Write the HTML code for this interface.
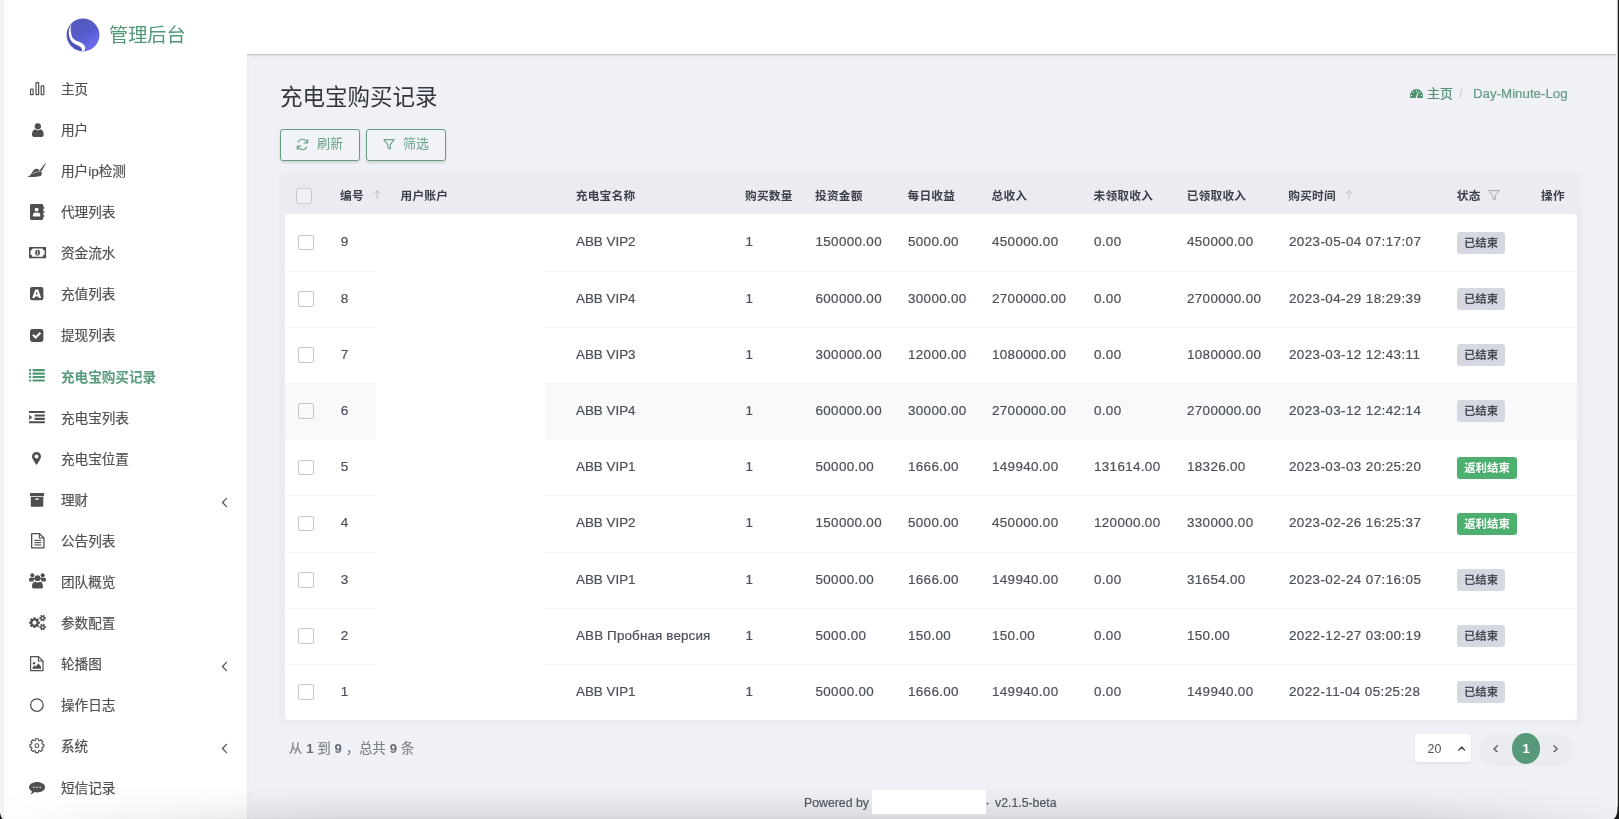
<!DOCTYPE html>
<html lang="zh-CN">
<head>
<meta charset="utf-8">
<title>充电宝购买记录</title>
<style>
*{box-sizing:border-box;margin:0;padding:0}
html,body{width:1619px;height:819px;overflow:hidden}
body{position:relative;background:#eff1f6;font-family:"Liberation Sans","Noto Sans CJK SC",sans-serif;color:#414750;font-size:14px}
.abs{position:absolute}
#topbar{position:absolute;left:0;top:0;width:1619px;height:54px;background:#fff}
#topline{position:absolute;left:247px;top:53px;width:1372px;height:5px;background:linear-gradient(#f6f7f7 0,#f6f7f7 1px,#cbcfd0 1px,#cbcfd0 2px,#dde1e2 2px,#dde1e2 3px,#e8ebed 3px,#e8ebed 4px,#edeff3 4px)}
#sidebar{position:absolute;left:0;top:0;width:247px;height:819px;background:#fff}
#leftedge{position:absolute;left:0;top:0;width:7px;height:819px;background:linear-gradient(90deg,#f5f5f5 0,#f2f2f2 3.6px,#fdfdfd 4.4px,#fdfdfd 6.5px,#fff 7px)}
#rightedge{position:absolute;left:1616px;top:0;width:3px;height:819px;background:linear-gradient(90deg,#f6f7fa 0,#f6f7fa 1px,#bcbcbc 1px,#bcbcbc 2px,#1e1e1e 2px)}
#rightfade{display:none}
#bottomfade{position:absolute;left:0;top:785px;width:1619px;height:34px;background:linear-gradient(rgba(0,0,0,0),rgba(0,0,0,.035) 45%,rgba(0,0,0,.095) 97%,rgba(0,0,0,.125) 97%);-webkit-mask-image:linear-gradient(90deg,rgba(0,0,0,.05) 0,rgba(0,0,0,.2) 60px,rgba(0,0,0,.75) 247px,#000 340px,#000 1400px,rgba(0,0,0,.3) 1580px,rgba(0,0,0,.1) 1619px);mask-image:linear-gradient(90deg,rgba(0,0,0,.05) 0,rgba(0,0,0,.2) 60px,rgba(0,0,0,.75) 247px,#000 340px,#000 1400px,rgba(0,0,0,.3) 1580px,rgba(0,0,0,.1) 1619px)}
#corner{position:absolute;left:0;top:812px;width:6px;height:7px}
#brandtxt{position:absolute;left:109px;top:21.5px;font-size:19.2px;line-height:28px;color:#4e9876;white-space:nowrap}
.mtx{position:absolute;left:61px;font-size:13.6px;line-height:21px;color:#515151;white-space:nowrap}
.mtx.act{color:#4f9977;font-weight:bold}
#title{position:absolute;left:280px;top:82px;font-size:22.5px;line-height:32px;color:#33363c;white-space:nowrap}
.btn{position:absolute;top:129px;height:32px;width:80px;border:1px solid #669a83;border-radius:3px;background:#f1f3f8;box-shadow:0 2px 3px rgba(0,0,0,.13);color:#69a388;font-size:13px;line-height:28.8px;white-space:nowrap}
.btn span{position:absolute;left:36px;top:0}
.btn svg{position:absolute}
.bc{position:absolute;top:84.2px;font-size:13px;line-height:20px;white-space:nowrap}
#card{position:absolute;left:280px;top:173.7px;width:1302px;height:551.5px;background:#ecebf1;border-radius:4px;box-shadow:0 0 2px rgba(236,235,241,.9)}
#rows{position:absolute;left:285px;top:214px;width:1292px;height:506px;background:#fff;border-radius:4px}
.th{position:absolute;top:187.1px;font-size:11.7px;line-height:18px;font-weight:bold;color:#3d424a;white-space:nowrap;letter-spacing:.22px}
.row{position:absolute;left:285px;width:1292px;height:56.2px}
.row .ln{position:absolute;left:0;top:0;width:1292px;height:1px;background:#f4f5f8}
.row.alt{background:#f8f9fb}
.td{position:absolute;top:18.2px;font-size:13.5px;line-height:20px;color:#4b5058;white-space:nowrap}
.td.nm{font-size:13.4px}
.td.ru{letter-spacing:.15px}
.td.nu{font-size:13.4px;letter-spacing:.35px}
.td.dt{font-size:13.4px;letter-spacing:.42px}
.cb{position:absolute;width:16px;height:15.6px;border:1.4px solid #c4c6cc;border-radius:2px;background:transparent}
.cb.h{background:#f0f1f5;border-color:#c9cbd2;border-width:1.5px}
.badge{position:absolute;left:1172px;top:17.5px;height:22px;border-radius:3px;font-size:11.4px;line-height:22px;font-weight:bold;text-align:center;white-space:nowrap}
.bg-gray{background:#d5d8e0;color:#474c55;width:48px}
.bg-green{background:#4caf6e;color:#fff;width:60px}
#blank{position:absolute;left:375.9px;top:214px;width:169px;height:506px;background:#fff}
#pgtext{position:absolute;left:289px;top:739.3px;font-size:13.2px;line-height:20px;color:#7f838a;white-space:nowrap;letter-spacing:.15px}
#pgtext b{color:#676b73}
#psize{position:absolute;left:1415px;top:734px;width:56px;height:28px;background:#fff;border-radius:3px;box-shadow:0 1px 3px rgba(0,0,0,.1)}
#psize span{position:absolute;left:12.5px;top:4.8px;font-size:12.4px;line-height:20px;color:#50555d}
#pill{position:absolute;left:1480px;top:734px;width:92px;height:30px;border-radius:15px;background:#ebecf0;box-shadow:0 1px 3px rgba(0,0,0,.06)}
#pcur{position:absolute;left:1511.6px;top:733px;width:28.8px;height:31px;border-radius:50%;background:#59997b;color:#fff;font-weight:bold;font-size:13px;line-height:31.5px;text-align:center}
.foot{position:absolute;top:793px;font-size:12.3px;line-height:20px;color:#555a62;white-space:nowrap}
#fbox{position:absolute;left:872px;top:790px;width:114px;height:24px;background:#fff}

.mtx,.td,#pgtext,.foot,.bc{-webkit-text-stroke:.2px currentColor}
.mtx.act{-webkit-text-stroke:0;color:#559a7b}
#pgtext b{-webkit-text-stroke:0}
#wrap{position:absolute;left:0;top:0;width:1619px;height:819px;overflow:hidden;will-change:transform;opacity:.999}
#sbshadow{position:absolute;left:247px;top:56px;width:2.5px;height:763px;background:linear-gradient(90deg,#ededf0,#eeeff3 70%,#eff1f6)}

</style>
</head>
<body>
<div id="wrap">
<div id="topbar"></div>
<div id="topline"></div>
<div id="sidebar"></div>
<div id="leftedge"></div>
<div id="sbshadow"></div>

<svg class="abs" style="left:65.7px;top:18.3px;width:34px;height:34px" viewBox="0 0 34 34">
  <defs><linearGradient id="lg" x1="0.25" y1="0.1" x2="0.8" y2="0.95"><stop offset="0" stop-color="#5359bd"/><stop offset="0.5" stop-color="#585ccb"/><stop offset="0.75" stop-color="#6664e6"/><stop offset="1" stop-color="#6f6cf2"/></linearGradient></defs>
  <circle cx="17" cy="17" r="16.4" fill="url(#lg)"/>
  <path d="M2.2 10 C0.6 15 1.2 20.5 4 25 C6.5 29 10.5 31.8 15.5 33 L16.3 31 C15.5 29.5 13.5 28.3 11 27.2 C8 25.8 5.5 24 4 21 C2.6 18 2 14 2.2 10Z" fill="#4d53b4"/>
  <path d="M5.6 6 C3.8 9 2.8 11.5 2.8 14.2 C2.8 16.5 3.1 18.5 3.8 20.2 C4.5 22.8 6.5 24.6 8.9 25.9 C11 27 13 27.8 14.5 28.9 C15.8 30 16.3 31.4 16.2 33.2 L18.4 32.8 C19.3 31 19.4 29.4 18.8 28 C17.8 26 15.5 24.8 12.8 23.7 C10 22.6 7.7 21.4 6.3 19.4 C5.6 17.6 5 15.6 4.8 13.3 C4.6 11 4.8 8.5 5.6 6Z" fill="#fff"/>
</svg>
<div id="brandtxt">管理后台</div>

<svg class="abs" style="left:30.0px;top:81.5px;width:14.3px;height:13.2px;color:#4f4f4f;fill:#4f4f4f;overflow:visible" viewBox="0 0 143 132"><g fill="none" stroke="currentColor" stroke-width="12"><rect x="5.5" y="70" width="26" height="56.5" rx="3"/><rect x="60.5" y="5.5" width="26" height="121" rx="3"/><rect x="112" y="38" width="26" height="88.5" rx="3"/></g></svg>
<div class="mtx" style="top:78.8px">主页</div>
<svg class="abs" style="left:31.5px;top:122.6px;width:11.7px;height:13.9px;color:#4f4f4f;fill:#4f4f4f;overflow:visible" viewBox="0 0 117 139"><circle cx="58.5" cy="33" r="31.5"/><path d="M0 114 C0 88 12 68 30 62 C38 70 48 73 58.5 73 C69 73 79 70 87 62 C105 68 117 88 117 114 C117 130 110 139 98 139 L19 139 C7 139 0 130 0 118Z"/></svg>
<div class="mtx" style="top:119.9px">用户</div>
<svg class="abs" style="left:27.2px;top:163.0px;width:19.2px;height:14.0px;color:#4f4f4f;fill:#4f4f4f;overflow:visible" viewBox="0 0 192 140"><path d="M-1 137 C16 134 30 126 40 112 C48 98 56 82 69 72 C78 62 88 58 96 58 C108 58 118 66 125 75 L129 72 C146 50 166 22 190 -4 C186 12 176 30 168 42 C160 58 150 72 142 85 L137 83 C143 88 147 94 149 100 C148 112 144 122 138 130 C120 134 98 138 76 139 C56 140 38 140 21 139.5 C12 139 4 138 -1 136Z"/><path d="M54 105 C80 94 106 87 138 82" fill="none" stroke="#fff" stroke-opacity=".8" stroke-width="6.5"/></svg>
<div class="mtx" style="top:161.0px">用户ip检测</div>
<svg class="abs" style="left:30.3px;top:203.7px;width:14.3px;height:15.9px;color:#4f4f4f;fill:#4f4f4f;overflow:visible" viewBox="0 0 143 159"><path d="M14 0 H118 C126 0 131 5 131 13 V146 C131 154 126 159 118 159 H14 C6 159 0 154 0 146 V13 C0 5 6 0 14 0Z"/><rect x="133" y="22" width="10" height="30" rx="3"/><rect x="133" y="64" width="10" height="30" rx="3"/><rect x="133" y="106" width="10" height="30" rx="3"/><circle cx="66" cy="56" r="19.5" fill="#fff"/><path d="M28 118 C28 96 40 84 52 84 C60 90 72 90 80 84 C92 84 104 96 104 118 C104 122 101 124 98 124 H34 C31 124 28 122 28 118Z" fill="#fff"/></svg>
<div class="mtx" style="top:202.1px">代理列表</div>
<svg class="abs" style="left:28.9px;top:247.0px;width:17.1px;height:11.3px;color:#4f4f4f;fill:#4f4f4f;overflow:visible" viewBox="0 0 171 113"><rect x="0" y="0" width="171" height="113" rx="5"/><path d="M34 16 H137 C137 28 145 36 156 36 V77 C145 77 137 85 137 97 H34 C34 85 26 77 15 77 V36 C26 36 34 28 34 16Z" fill="#fff"/><ellipse cx="85.5" cy="56.5" rx="24" ry="30"/><path d="M80 40 L90 37 V72 H95 V78 H77 V72 H83 V46 L80 47Z" fill="#fff"/></svg>
<div class="mtx" style="top:243.2px">资金流水</div>
<svg class="abs" style="left:30.4px;top:287.3px;width:13.4px;height:13.3px;color:#4f4f4f;fill:#4f4f4f;overflow:visible" viewBox="0 0 134 133"><rect x="0" y="0" width="134" height="133" rx="22"/><path d="M52 24 H82 L112 110 H88 L83 94 H51 L46 110 H22Z M67 44 L57 76 H77Z" fill="#fff" fill-rule="evenodd"/></svg>
<div class="mtx" style="top:284.3px">充值列表</div>
<svg class="abs" style="left:30.4px;top:328.8px;width:13.4px;height:13.0px;color:#4f4f4f;fill:#4f4f4f;overflow:visible" viewBox="0 0 134 130"><rect x="0" y="0" width="134" height="130" rx="24"/><path d="M22 66 L37 51 L56 70 L97 29 L112 44 L56 100Z" fill="#fff"/></svg>
<div class="mtx" style="top:325.4px">提现列表</div>
<svg class="abs" style="left:29.2px;top:369.1px;width:15.8px;height:12.6px;color:#4e9876;fill:#4e9876;overflow:visible" viewBox="0 0 158 126"><rect x="0" y="0" width="22" height="22" rx="3"/><rect x="36" y="0" width="122" height="22" rx="3"/><rect x="0" y="35" width="22" height="22" rx="3"/><rect x="36" y="35" width="122" height="22" rx="3"/><rect x="0" y="69" width="22" height="22" rx="3"/><rect x="36" y="69" width="122" height="22" rx="3"/><rect x="0" y="104" width="22" height="22" rx="3"/><rect x="36" y="104" width="122" height="22" rx="3"/></svg>
<div class="mtx act" style="top:366.5px">充电宝购买记录</div>
<svg class="abs" style="left:29.2px;top:410.8px;width:15.8px;height:12.3px;color:#4f4f4f;fill:#4f4f4f;overflow:visible" viewBox="0 0 158 123"><rect x="0" y="0" width="158" height="21" rx="2"/><rect x="0" y="102" width="158" height="21" rx="2"/><rect x="56" y="34" width="102" height="21" rx="2"/><rect x="56" y="68" width="102" height="21" rx="2"/><path d="M2 34 L32 61.5 L2 89Z"/></svg>
<div class="mtx" style="top:407.6px">充电宝列表</div>
<svg class="abs" style="left:32.3px;top:451.5px;width:9.0px;height:12.7px;color:#4f4f4f;fill:#4f4f4f;overflow:visible" viewBox="0 0 90 127"><path d="M45 0 C70 0 90 19 90 44 C90 56 86 64 80 74 L52 122 C49 128 41 128 38 122 L10 74 C4 64 0 56 0 44 C0 19 20 0 45 0Z M45 25 A20 20 0 1 0 45.1 25Z" fill-rule="evenodd"/></svg>
<div class="mtx" style="top:448.7px">充电宝位置</div>
<svg class="abs" style="left:30.3px;top:492.8px;width:14.1px;height:13.8px;color:#4f4f4f;fill:#4f4f4f;overflow:visible" viewBox="0 0 141 138"><rect x="0" y="0" width="141" height="32" rx="3"/><path d="M8 39 H133 V131 C133 135 130 138 126 138 H15 C11 138 8 135 8 131Z"/><rect x="52" y="56" width="37" height="11" rx="5" fill="#fff"/></svg>
<div class="mtx" style="top:489.8px">理财</div>
<svg class="abs" style="left:221.4px;top:496.8px;width:7px;height:11px" viewBox="0 0 7 11"><path d="M5.5 1.4 L1.5 5.5 L5.5 9.6" fill="none" stroke="#585858" stroke-width="1.35" stroke-linecap="round" stroke-linejoin="round"/></svg>
<svg class="abs" style="left:30.5px;top:533.1px;width:13.6px;height:15.5px;color:#4f4f4f;fill:#4f4f4f;overflow:visible" viewBox="0 0 136 155"><path d="M6.5 6.5 H84 L129.5 50 V148.5 H6.5Z" fill="none" stroke="currentColor" stroke-width="13" stroke-linejoin="round"/><path d="M84 6 V50 H130" fill="none" stroke="currentColor" stroke-width="11" stroke-linejoin="round"/><rect x="34" y="68" width="68" height="11"/><rect x="34" y="91" width="68" height="11"/><rect x="34" y="114" width="68" height="11"/></svg>
<div class="mtx" style="top:530.9px">公告列表</div>
<svg class="abs" style="left:28.5px;top:573.3px;width:17.0px;height:15.6px;color:#4f4f4f;fill:#4f4f4f;overflow:visible" viewBox="0 0 170 156"><circle cx="33" cy="22" r="20"/><circle cx="137" cy="22" r="20"/><path d="M0 72 C0 54 10 46 22 46 C30 50 38 50 44 46 C52 46 58 50 62 56 C52 62 46 72 44 86 H12 C4 86 0 80 0 72Z"/><path d="M170 72 C170 54 160 46 148 46 C140 50 132 50 126 46 C118 46 112 50 108 56 C118 62 124 72 126 86 H158 C166 86 170 80 170 72Z"/><circle cx="85" cy="52" r="29"/><path d="M30 134 C30 106 44 88 60 88 C76 98 94 98 110 88 C126 88 140 106 140 134 C140 148 132 156 120 156 H50 C38 156 30 148 30 134Z"/></svg>
<div class="mtx" style="top:572.0px">团队概览</div>
<svg class="abs" style="left:28.7px;top:614.8px;width:17.0px;height:15.4px;color:#4f4f4f;fill:#4f4f4f;overflow:visible" viewBox="0 0 170 154"><path d="M109.1 67.1 L109.1 86.9 L96.4 88.7 L92.5 98.0 L100.2 108.3 L86.3 122.2 L76.0 114.5 L66.7 118.4 L64.9 131.1 L45.1 131.1 L43.3 118.4 L34.0 114.5 L23.7 122.2 L9.8 108.3 L17.5 98.0 L13.6 88.7 L0.9 86.9 L0.9 67.1 L13.6 65.3 L17.5 56.0 L9.8 45.7 L23.7 31.8 L34.0 39.5 L43.3 35.6 L45.1 22.9 L64.9 22.9 L66.7 35.6 L76.0 39.5 L86.3 31.8 L100.2 45.7 L92.5 56.0 L96.4 65.3Z M55.0 56.0 a21.0 21.0 0 1 0 0.1 0Z" fill-rule="evenodd"/><path d="M169.2 23.6 L169.2 38.4 L158.1 39.0 L153.9 46.2 L159.0 56.0 L146.2 63.4 L140.2 54.1 L131.8 54.1 L125.8 63.4 L113.0 56.0 L118.1 46.2 L113.9 39.0 L102.8 38.4 L102.8 23.6 L113.9 23.0 L118.1 15.8 L113.0 6.0 L125.8 -1.4 L131.8 7.9 L140.2 7.9 L146.2 -1.4 L159.0 6.0 L153.9 15.8 L158.1 23.0Z M136.0 21.5 a9.5 9.5 0 1 0 0.1 0Z" fill-rule="evenodd"/><path d="M169.2 113.6 L169.2 128.4 L158.1 129.0 L153.9 136.2 L159.0 146.0 L146.2 153.4 L140.2 144.1 L131.8 144.1 L125.8 153.4 L113.0 146.0 L118.1 136.2 L113.9 129.0 L102.8 128.4 L102.8 113.6 L113.9 113.0 L118.1 105.8 L113.0 96.0 L125.8 88.6 L131.8 97.9 L140.2 97.9 L146.2 88.6 L159.0 96.0 L153.9 105.8 L158.1 113.0Z M136.0 111.5 a9.5 9.5 0 1 0 0.1 0Z" fill-rule="evenodd"/></svg>
<div class="mtx" style="top:613.1px">参数配置</div>
<svg class="abs" style="left:30.4px;top:656.1px;width:13.6px;height:15.3px;color:#4f4f4f;fill:#4f4f4f;overflow:visible" viewBox="0 0 136 153"><path d="M6 6 H84 L130 50 V147 H6Z" fill="none" stroke="currentColor" stroke-width="12" stroke-linejoin="round"/><path d="M84 6 V50 H130" fill="none" stroke="currentColor" stroke-width="11" stroke-linejoin="round"/><circle cx="40" cy="72" r="12"/><path d="M26 128 V112 L44 94 L56 106 L84 76 L110 104 V128Z"/></svg>
<div class="mtx" style="top:654.2px">轮播图</div>
<svg class="abs" style="left:221.4px;top:661.2px;width:7px;height:11px" viewBox="0 0 7 11"><path d="M5.5 1.4 L1.5 5.5 L5.5 9.6" fill="none" stroke="#585858" stroke-width="1.35" stroke-linecap="round" stroke-linejoin="round"/></svg>
<svg class="abs" style="left:30.3px;top:697.8px;width:13.8px;height:14.2px;color:#4f4f4f;fill:#4f4f4f;overflow:visible" viewBox="0 0 138 142"><circle cx="69" cy="71" r="63" fill="none" stroke="currentColor" stroke-width="13"/></svg>
<div class="mtx" style="top:695.3px">操作日志</div>
<svg class="abs" style="left:29.4px;top:738.3px;width:15.8px;height:15.3px;color:#4f4f4f;fill:#4f4f4f;overflow:visible" viewBox="0 0 158 153"><path d="M65.1 6.9 L92.9 6.9 L94.2 22.6 L106.4 27.6 L118.4 17.5 L138.0 37.1 L127.9 49.1 L132.9 61.3 L148.6 62.6 L148.6 90.4 L132.9 91.7 L127.9 103.9 L138.0 115.9 L118.4 135.5 L106.4 125.4 L94.2 130.4 L92.9 146.1 L65.1 146.1 L63.8 130.4 L51.6 125.4 L39.6 135.5 L20.0 115.9 L30.1 103.9 L25.1 91.7 L9.4 90.4 L9.4 62.6 L25.1 61.3 L30.1 49.1 L20.0 37.1 L39.6 17.5 L51.6 27.6 L63.8 22.6Z" fill="none" stroke="currentColor" stroke-width="11" stroke-linejoin="round"/><circle cx="79.0" cy="76.5" r="19.0" fill="none" stroke="currentColor" stroke-width="11"/></svg>
<div class="mtx" style="top:736.4px">系统</div>
<svg class="abs" style="left:221.4px;top:743.4px;width:7px;height:11px" viewBox="0 0 7 11"><path d="M5.5 1.4 L1.5 5.5 L5.5 9.6" fill="none" stroke="#585858" stroke-width="1.35" stroke-linecap="round" stroke-linejoin="round"/></svg>
<svg class="abs" style="left:29.2px;top:781.7px;width:16.1px;height:12.9px;color:#4f4f4f;fill:#4f4f4f;overflow:visible" viewBox="0 0 161 129"><path d="M80.5 0 C125 0 161 23 161 52 C161 81 125 104 80.5 104 C72 104 64 103 56 101 C44 112 30 122 14 126 C22 116 28 104 30 92 C12 82 0 68 0 52 C0 23 36 0 80.5 0Z"/><circle cx="50" cy="52" r="7.5" fill="#fff"/><circle cx="80.5" cy="52" r="7.5" fill="#fff"/><circle cx="111" cy="52" r="7.5" fill="#fff"/></svg>
<div class="mtx" style="top:777.5px">短信记录</div>

<div id="title">充电宝购买记录</div>
<div class="btn" style="left:280px"><svg style="left:15.2px;top:7.8px;width:13px;height:13px" viewBox="0 0 14 14"><path d="M12.3 5.2 A5.5 5.5 0 0 0 2.2 4.2 M1.7 8.8 A5.5 5.5 0 0 0 11.8 9.8 M12.6 1.6 V5.3 H8.9 M1.4 12.4 V8.7 H5.1" fill="none" stroke="#69a388" stroke-width="1.2" stroke-linecap="round" stroke-linejoin="round"/></svg><span>刷新</span></div>
<div class="btn" style="left:366px"><svg style="left:16px;top:8.7px;width:12px;height:11px" viewBox="0 0 13 12"><path d="M0.8 0.7 H12.2 L7.8 6.1 V11 L5.2 9.4 V6.1Z" fill="none" stroke="#69a388" stroke-width="1.2" stroke-linejoin="round"/></svg><span>筛选</span></div>

<svg class="abs" style="left:1410.2px;top:89.3px;width:13px;height:9.2px" viewBox="0 0 130 88" preserveAspectRatio="none"><path d="M65 0 C101 0 130 29 130 65 C130 72 129 78 127 83 C126 86 123 88 120 88 H10 C7 88 4 86 3 83 C1 78 0 72 0 65 C0 29 29 0 65 0Z" fill="#4d9070"/><g fill="#eef1f6"><circle cx="65" cy="16" r="7"/><circle cx="30" cy="30" r="7"/><circle cx="100" cy="30" r="7"/><circle cx="16" cy="62" r="7"/><circle cx="114" cy="62" r="7"/><path d="M60 74 L78 26 L86 29 L72 78 A8 8 0 1 1 60 74Z"/></g></svg>
<div class="bc" style="left:1427px;color:#4f9271">主页</div>
<div class="bc" style="left:1459px;color:#cdd0d6">/</div>
<div class="bc" style="left:1473px;color:#669a84;font-size:13.3px">Day-Minute-Log</div>

<div id="card"></div>
<div id="rows"></div>
<div class="cb h" style="left:296.4px;top:188px"></div>
<div class="th" style="left:340.0px">编号</div>
<div class="th" style="left:400.5px">用户账户</div>
<div class="th" style="left:575.8px">充电宝名称</div>
<div class="th" style="left:745.0px">购买数量</div>
<div class="th" style="left:815.0px">投资金额</div>
<div class="th" style="left:907.5px">每日收益</div>
<div class="th" style="left:991.5px">总收入</div>
<div class="th" style="left:1093.5px">未领取收入</div>
<div class="th" style="left:1186.7px">已领取收入</div>
<div class="th" style="left:1288.3px">购买时间</div>
<div class="th" style="left:1456.8px">状态</div>
<div class="th" style="left:1541.0px">操作</div>
<svg class="abs" style="left:372.6px;top:189.5px;width:8px;height:9.6px" viewBox="0 0 9 11"><path d="M4.5 10.5 V1 M1 4.3 L4.5 0.8 L8 4.3" fill="none" stroke="#b3b6bc" stroke-width="1" stroke-linecap="round" stroke-linejoin="round"/></svg>
<svg class="abs" style="left:1344.6px;top:189.5px;width:8px;height:9.6px" viewBox="0 0 9 11"><path d="M4.5 10.5 V1 M1 4.3 L4.5 0.8 L8 4.3" fill="none" stroke="#b3b6bc" stroke-width="1" stroke-linecap="round" stroke-linejoin="round"/></svg>
<svg class="abs" style="left:1488px;top:189.5px;width:12px;height:11px" viewBox="0 0 12 11"><path d="M0.7 0.6 H11.3 L7.2 5.6 V10 L4.8 8.6 V5.6Z" fill="none" stroke="#a3a6ad" stroke-width="1" stroke-linejoin="round"/></svg>
<div class="row" style="top:214.3px"><div class="cb" style="left:13px;top:20.6px"></div><div class="td" style="left:55.7px">9</div><div class="td nm" style="left:291.0px">ABB VIP2</div><div class="td nu" style="left:460.5px">1</div><div class="td nu" style="left:530.5px">150000.00</div><div class="td nu" style="left:623.0px">5000.00</div><div class="td nu" style="left:707.0px">450000.00</div><div class="td nu" style="left:809.0px">0.00</div><div class="td nu" style="left:902.0px">450000.00</div><div class="td dt" style="left:1004.0px">2023-05-04 07:17:07</div><div class="badge bg-gray">已结束</div></div>
<div class="row" style="top:270.5px"><div class="ln"></div><div class="cb" style="left:13px;top:20.6px"></div><div class="td" style="left:55.7px">8</div><div class="td nm" style="left:291.0px">ABB VIP4</div><div class="td nu" style="left:460.5px">1</div><div class="td nu" style="left:530.5px">600000.00</div><div class="td nu" style="left:623.0px">30000.00</div><div class="td nu" style="left:707.0px">2700000.00</div><div class="td nu" style="left:809.0px">0.00</div><div class="td nu" style="left:902.0px">2700000.00</div><div class="td dt" style="left:1004.0px">2023-04-29 18:29:39</div><div class="badge bg-gray">已结束</div></div>
<div class="row" style="top:326.7px"><div class="ln"></div><div class="cb" style="left:13px;top:20.6px"></div><div class="td" style="left:55.7px">7</div><div class="td nm" style="left:291.0px">ABB VIP3</div><div class="td nu" style="left:460.5px">1</div><div class="td nu" style="left:530.5px">300000.00</div><div class="td nu" style="left:623.0px">12000.00</div><div class="td nu" style="left:707.0px">1080000.00</div><div class="td nu" style="left:809.0px">0.00</div><div class="td nu" style="left:902.0px">1080000.00</div><div class="td dt" style="left:1004.0px">2023-03-12 12:43:11</div><div class="badge bg-gray">已结束</div></div>
<div class="row alt" style="top:382.9px"><div class="ln"></div><div class="cb" style="left:13px;top:20.6px"></div><div class="td" style="left:55.7px">6</div><div class="td nm" style="left:291.0px">ABB VIP4</div><div class="td nu" style="left:460.5px">1</div><div class="td nu" style="left:530.5px">600000.00</div><div class="td nu" style="left:623.0px">30000.00</div><div class="td nu" style="left:707.0px">2700000.00</div><div class="td nu" style="left:809.0px">0.00</div><div class="td nu" style="left:902.0px">2700000.00</div><div class="td dt" style="left:1004.0px">2023-03-12 12:42:14</div><div class="badge bg-gray">已结束</div></div>
<div class="row" style="top:439.1px"><div class="ln"></div><div class="cb" style="left:13px;top:20.6px"></div><div class="td" style="left:55.7px">5</div><div class="td nm" style="left:291.0px">ABB VIP1</div><div class="td nu" style="left:460.5px">1</div><div class="td nu" style="left:530.5px">50000.00</div><div class="td nu" style="left:623.0px">1666.00</div><div class="td nu" style="left:707.0px">149940.00</div><div class="td nu" style="left:809.0px">131614.00</div><div class="td nu" style="left:902.0px">18326.00</div><div class="td dt" style="left:1004.0px">2023-03-03 20:25:20</div><div class="badge bg-green">返利结束</div></div>
<div class="row" style="top:495.3px"><div class="ln"></div><div class="cb" style="left:13px;top:20.6px"></div><div class="td" style="left:55.7px">4</div><div class="td nm" style="left:291.0px">ABB VIP2</div><div class="td nu" style="left:460.5px">1</div><div class="td nu" style="left:530.5px">150000.00</div><div class="td nu" style="left:623.0px">5000.00</div><div class="td nu" style="left:707.0px">450000.00</div><div class="td nu" style="left:809.0px">120000.00</div><div class="td nu" style="left:902.0px">330000.00</div><div class="td dt" style="left:1004.0px">2023-02-26 16:25:37</div><div class="badge bg-green">返利结束</div></div>
<div class="row" style="top:551.5px"><div class="ln"></div><div class="cb" style="left:13px;top:20.6px"></div><div class="td" style="left:55.7px">3</div><div class="td nm" style="left:291.0px">ABB VIP1</div><div class="td nu" style="left:460.5px">1</div><div class="td nu" style="left:530.5px">50000.00</div><div class="td nu" style="left:623.0px">1666.00</div><div class="td nu" style="left:707.0px">149940.00</div><div class="td nu" style="left:809.0px">0.00</div><div class="td nu" style="left:902.0px">31654.00</div><div class="td dt" style="left:1004.0px">2023-02-24 07:16:05</div><div class="badge bg-gray">已结束</div></div>
<div class="row" style="top:607.7px"><div class="ln"></div><div class="cb" style="left:13px;top:20.6px"></div><div class="td" style="left:55.7px">2</div><div class="td nm ru" style="left:291.0px">ABB Пробная версия</div><div class="td nu" style="left:460.5px">1</div><div class="td nu" style="left:530.5px">5000.00</div><div class="td nu" style="left:623.0px">150.00</div><div class="td nu" style="left:707.0px">150.00</div><div class="td nu" style="left:809.0px">0.00</div><div class="td nu" style="left:902.0px">150.00</div><div class="td dt" style="left:1004.0px">2022-12-27 03:00:19</div><div class="badge bg-gray">已结束</div></div>
<div class="row" style="top:663.9px"><div class="ln"></div><div class="cb" style="left:13px;top:20.6px"></div><div class="td" style="left:55.7px">1</div><div class="td nm" style="left:291.0px">ABB VIP1</div><div class="td nu" style="left:460.5px">1</div><div class="td nu" style="left:530.5px">50000.00</div><div class="td nu" style="left:623.0px">1666.00</div><div class="td nu" style="left:707.0px">149940.00</div><div class="td nu" style="left:809.0px">0.00</div><div class="td nu" style="left:902.0px">149940.00</div><div class="td dt" style="left:1004.0px">2022-11-04 05:25:28</div><div class="badge bg-gray">已结束</div></div>
<div id="blank"></div>

<div id="pgtext">从 <b>1</b> 到 <b>9</b> ，总共 <b>9</b> 条</div>
<div id="psize"><span>20</span><svg class="abs" style="left:43px;top:11.8px;width:7.4px;height:5px" viewBox="0 0 9 6"><path d="M1 5 L4.5 1.3 L8 5" fill="none" stroke="#444" stroke-width="1.7" stroke-linecap="round" stroke-linejoin="round"/></svg></div>
<div id="pill"></div>
<div id="pcur">1</div>
<svg class="abs" style="left:1493.4px;top:744.6px;width:5.2px;height:7.8px" viewBox="0 0 6 9"><path d="M5 0.8 L1.2 4.5 L5 8.2" fill="none" stroke="#6c6c6c" stroke-width="1.75" stroke-linecap="round" stroke-linejoin="round"/></svg>
<svg class="abs" style="left:1552.6px;top:744.6px;width:5.2px;height:7.8px" viewBox="0 0 6 9"><path d="M1 0.8 L4.8 4.5 L1 8.2" fill="none" stroke="#6c6c6c" stroke-width="1.75" stroke-linecap="round" stroke-linejoin="round"/></svg>

<div class="foot" style="left:804px">Powered by</div>
<div class="foot" style="left:985.5px">·</div>
<div class="foot" style="left:995px">v2.1.5-beta</div>

<div id="bottomfade"></div>
<div id="fbox"></div>
<div id="rightfade"></div>
<div id="rightedge"></div>
<svg id="corner" viewBox="0 0 6 7"><path d="M0 0 C0.3 3 1.2 5.5 2.6 7 H0Z" fill="#111"/></svg>
<svg class="abs" style="left:1612px;top:807px;width:7px;height:12px" viewBox="0 0 7 12"><path d="M5.6 0 C5.6 6 4.5 9.5 1.8 12 H7 V0Z" fill="#1a1a1a"/></svg>
</div>
</body>
</html>
